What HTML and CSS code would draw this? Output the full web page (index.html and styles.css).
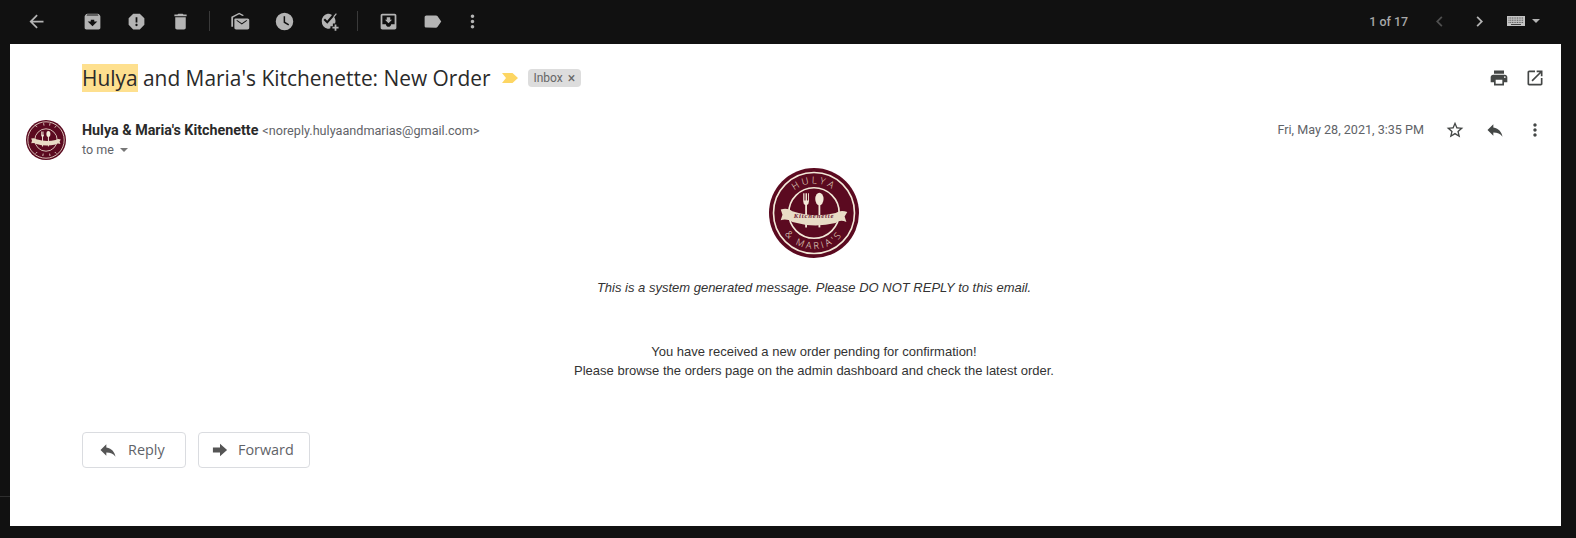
FILE: index.html
```html
<!DOCTYPE html>
<html lang="en">
<head>
<meta charset="utf-8">
<title>Hulya and Maria's Kitchenette: New Order</title>
<link rel="stylesheet" href="styles.css">
</head>
<body>
<span class="gutter-line"></span>
<header class="toolbar">
  <button class="tool tool-back" aria-label="Back"><svg viewBox="0 0 24 24"><path d="M20 11H7.830l5.590-5.590L12 4l-8 8 8 8 1.410-1.410L7.830 13H20v-2z"/></svg></button>
  <button class="tool tool-first" aria-label="Archive"><svg viewBox="0 0 24 24"><path d="M20.540 5.230l-1.390-1.680C18.880 3.210 18.470 3 18 3H6c-.47 0-.88.210-1.160.550L3.460 5.230C3.170 5.570 3 6.020 3 6.500V19c0 1.100.9 2 2 2h14c1.100 0 2-.9 2-2V6.500c0-.48-.17-.93-.46-1.270zM12 17.500L6.500 12H10v-2h4v2h3.500L12 17.500zM5.120 5l.81-1h12l.94 1H5.120z"/></svg></button>
  <button class="tool" aria-label="Report spam"><svg viewBox="0 0 24 24"><path d="M15.730 3H8.270L3 8.270v7.460L8.270 21h7.460L21 15.730V8.270L15.730 3zM12 17.300c-.72 0-1.300-.58-1.300-1.300 0-.72.58-1.300 1.300-1.300.72 0 1.300.58 1.300 1.300 0 .72-.58 1.300-1.300 1.300zm1-4.300h-2V7h2v6z"/></svg></button>
  <button class="tool" aria-label="Delete"><svg viewBox="0 0 24 24"><path d="M6 19c0 1.100.9 2 2 2h8c1.100 0 2-.9 2-2V7H6v12zM19 4h-3.500l-1-1h-5l-1 1H5v2h14V4z"/></svg></button>
  <span class="divider"></span>
  <button class="tool" aria-label="Mark as unread"><svg viewBox="0 0 24 24"><path d="M1.500 18V6.500L10.500 2l5.500 2.800-1.800.9-3.700-1.900-7 3.500V18z"/><path d="M6 8.500h14c1.300 0 2 .8 2 2V19c0 1.200-.7 2-2 2H7c-1.200 0-2-.8-2-2v-9.500c0-.6.400-1 1-1zm1.500 2.600l6 4.200 6-4.200v-.6h-1l-5 3.400-5-3.400h-1z"/></svg></button>
  <button class="tool" aria-label="Snooze"><svg viewBox="0 0 24 24"><path d="M12 2a10 10 0 1 0 0 20 10 10 0 0 0 0-20zm4.400 14.600L11 13.300V6h1.700v6.400l4.600 2.800z"/></svg></button>
  <button class="tool" aria-label="Add to tasks"><svg viewBox="0 0 24 24"><path d="M11 3c1.900 0 3.600.6 5 1.600L10.500 11 8 8.500 6.300 10.200l4.300 4.300L18 6.200c1.200 1.500 2 3.400 2 5.300 0 1-.2 2-.5 2.900H17v3h-2.800v2.400c-1 .4-2.100.6-3.200.6a9 9 0 0 1 0-17.400z"/><path d="M20.500 2.500l1 1L18.500 7l-1-1zM19 15.500h2V18h2.500v2H21v2.500h-2V20h-2.500v-2H19z"/></svg></button>
  <span class="divider"></span>
  <button class="tool" aria-label="Move to"><svg viewBox="0 0 24 24"><path d="M19 3H4.990C3.880 3 3.010 3.900 3.010 5L3 19c0 1.100.88 2 1.990 2H19c1.100 0 2-.9 2-2V5c0-1.100-.9-2-2-2zm0 12h-4c0 1.660-1.350 3-3 3s-3-1.340-3-3H4.990V5H19v10zm-3-5h-2V7h-4v3H8l4 4 4-4z"/></svg></button>
  <button class="tool" aria-label="Labels"><svg viewBox="0 0 24 24"><path d="M17.630 5.840C17.270 5.330 16.670 5 16 5L5 5.010C3.900 5.010 3 5.900 3 7v10c0 1.100.9 1.990 2 1.990L16 19c.67 0 1.270-.33 1.630-.84L22 12l-4.370-6.160z"/></svg></button>
  <button class="tool tool-more" aria-label="More"><svg viewBox="0 0 24 24"><path d="M12 8c1.100 0 2-.9 2-2s-.9-2-2-2-2 .9-2 2 .9 2 2 2zm0 2c-1.100 0-2 .9-2 2s.9 2 2 2 2-.9 2-2-.9-2-2-2zm0 6c-1.100 0-2 .9-2 2s.9 2 2 2 2-.9 2-2-.9-2-2-2z"/></svg></button>
  <div class="pager">
    <span class="pager-count">1 of 17</span>
    <button class="tool tool-dim" aria-label="Newer"><svg viewBox="0 0 24 24"><path d="M15.410 7.410L14 6l-6 6 6 6 1.410-1.410L10.830 12z"/></svg></button>
    <button class="tool" aria-label="Older"><svg viewBox="0 0 24 24"><path d="M8.590 16.590L10 18l6-6-6-6-1.410 1.410L13.170 12z"/></svg></button>
    <svg class="keyboard" viewBox="0 0 18 10" aria-hidden="true"><rect width="18" height="10" fill="#c4c4c4"/><path d="M1.500 2h15M1.500 4.200h15M1.500 6.400h15" stroke="#444" stroke-width=".9" stroke-dasharray="1 .7"/><path d="M4 8.500h10" stroke="#444"/></svg>
    <span class="caret caret-light"></span>
  </div>
</header>

<main class="card">
  <div class="subject-row">
    <h1 class="subject"><mark class="hit">Hulya</mark> and Maria's Kitchenette: New Order</h1>
    <svg class="importance" viewBox="0 0 16 12" aria-hidden="true"><path d="M0 1h10.500L16 6l-5.500 5H0l4-5z"/></svg>
    <span class="chip">Inbox<span class="chip-x">×</span></span>
    <div class="subject-actions">
      <button class="act" aria-label="Print all"><svg viewBox="0 0 24 24"><path d="M19 8H5c-1.660 0-3 1.340-3 3v6h4v4h12v-4h4v-6c0-1.660-1.340-3-3-3zm-3 11H8v-5h8v5zm3-7c-.55 0-1-.45-1-1s.45-1 1-1 1 .45 1 1-.45 1-1 1zm-1-9H6v4h12V3z"/></svg></button>
      <button class="act" aria-label="In new window"><svg viewBox="0 0 24 24"><path d="M19 19H5V5h7V3H5c-1.110 0-2 .9-2 2v14c0 1.100.89 2 2 2h14c1.100 0 2-.9 2-2v-7h-2v7zM14 3v2h3.590l-9.830 9.830 1.410 1.410L19 6.410V10h2V3h-7z"/></svg></button>
    </div>
  </div>

  <div class="sender-row">
    <svg class="avatar" viewBox="0 0 100 100" role="img" aria-label="Hulya and Maria's logo">
      <circle cx="50" cy="50" r="50" fill="#5b0a20"/>
      <circle cx="50" cy="50" r="45.500" fill="none" stroke="#f3e9d8" stroke-width="2"/>
      <circle cx="50" cy="50" r="28" fill="none" stroke="#f3e9d8" stroke-width="2"/>
      <path d="M38 29v9q0 3 2.200 4v24h2.400V42q2.200-1 2.200-4v-9h-1v8h-1.200v-8h-1.600v8h-1.200v-8z" fill="#f3e9d8"/>
      <ellipse cx="56" cy="35" rx="5" ry="7.500" fill="#f3e9d8"/>
      <rect x="54.800" y="40" width="2.400" height="26" fill="#f3e9d8"/>
      <path d="M13 46q8-2 13 2 24 8 48 2 6-4 13-1l-3 5 2 6q-7-3-12 1-24 6-48-1-6-4-13-2l2-6z" fill="#e9dcc6"/>
      <path d="M22 13l6 4M44 8l1 6M60 8l-1 6M76 14l-4 5M24 84l4-4M42 90l1-6M60 90l-1-6M76 84l-4-4" stroke="#f3e9d8" stroke-width="2"/>
    </svg>
    <div class="sender-info">
      <div class="sender-line"><strong class="sender-name">Hulya &amp; Maria's Kitchenette</strong> <span class="sender-mail">&lt;noreply.hulyaandmarias@gmail.com&gt;</span></div>
      <div class="to-line">to me <span class="caret caret-grey"></span></div>
    </div>
    <div class="sender-actions">
      <span class="date">Fri, May 28, 2021, 3:35 PM</span>
      <button class="act act-star" aria-label="Star"><svg viewBox="0 0 24 24"><path d="M22 9.240l-7.190-.62L12 2 9.190 8.630 2 9.240l5.460 4.730L5.820 21 12 17.270 18.180 21l-1.630-7.030L22 9.240zM12 15.400l-3.760 2.270 1-4.280-3.320-2.880 4.380-.38L12 6.100l1.710 4.040 4.380.38-3.320 2.880 1 4.280L12 15.400z"/></svg></button>
      <button class="act act-reply" aria-label="Reply"><svg viewBox="0 0 24 24"><path d="M10 9V5l-7 7 7 7v-4.100c5 0 8.500 1.600 11 5.100-1-5-4-10-11-11z"/></svg></button>
      <button class="act act-more" aria-label="More"><svg viewBox="0 0 24 24"><path d="M12 8c1.100 0 2-.9 2-2s-.9-2-2-2-2 .9-2 2 .9 2 2 2zm0 2c-1.100 0-2 .9-2 2s.9 2 2 2 2-.9 2-2-.9-2-2-2zm0 6c-1.100 0-2 .9-2 2s.9 2 2 2 2-.9 2-2-.9-2-2-2z"/></svg></button>
    </div>
  </div>

  <section class="message">
    <svg class="logo" viewBox="0 0 100 100" role="img" aria-label="Hulya and Maria's Kitchenette logo">
      <circle cx="50" cy="50" r="50" fill="#5b0a20"/>
      <circle cx="50" cy="50" r="45" fill="none" stroke="#f3e9d8" stroke-width="1.800"/>
      <circle cx="50" cy="50" r="28" fill="none" stroke="#f3e9d8" stroke-width="1.800"/>
      <path id="logo-arc-top" d="M17 50 A33 33 0 0 1 83 50" fill="none"/>
      <path id="logo-arc-bottom" d="M10 50 A40 40 0 0 0 90 50" fill="none"/>
      <text class="logo-ring"><textPath href="#logo-arc-top" startOffset="50%" text-anchor="middle">HULYA</textPath></text>
      <text class="logo-ring"><textPath href="#logo-arc-bottom" startOffset="50%" text-anchor="middle">&amp; MARIA'S</textPath></text>
      <path d="M38 28v9q0 3 2.200 4v25h2V41q2.200-1 2.200-4v-9h-1v8h-1.200v-8h-1.600v8h-1.200v-8z" fill="#f3e9d8"/>
      <ellipse cx="56" cy="34.500" rx="4.600" ry="7" fill="#f3e9d8"/>
      <rect x="55" y="40" width="2" height="26" fill="#f3e9d8"/>
      <path d="M13 46q8-2 13 2 24 8 48 2 6-4 13-1l-3 5 2 6q-7-3-12 1-24 6-48-1-6-4-13-2l2-6z" fill="#e9dcc6"/>
      <text class="logo-script" x="50" y="55.500" text-anchor="middle">Kitchenette</text>
    </svg>
    <p class="notice">This is a system generated message. Please DO NOT REPLY to this email.</p>
    <p class="copy">You have received a new order pending for confirmation!<br>Please browse the orders page on the admin dashboard and check the latest order.</p>
  </section>

  <div class="reply-row">
    <button class="reply-btn reply-btn-reply"><svg viewBox="0 0 24 24"><path d="M10 9V5l-7 7 7 7v-4.100c5 0 8.500 1.600 11 5.100-1-5-4-10-11-11z"/></svg><span class="reply-label">Reply</span></button>
    <button class="reply-btn reply-btn-forward"><svg viewBox="0 0 24 24"><path d="M12 4.500V9H3.500v6H12v4.500l8.500-7.500z"/></svg><span class="reply-label">Forward</span></button>
  </div>
</main>
</body>
</html>
```
FILE: styles.css
```css
* { box-sizing: border-box; }
html, body { height: 100%; }
body {
  margin: 0;
  background: #111111;
  font-family: Roboto, "Liberation Sans", sans-serif;
  overflow: hidden;
}
button { border: 0; background: none; padding: 0; font: inherit; cursor: pointer; }
.gutter-line { position: absolute; top: 496px; left: 0; width: 10px; height: 1px; background: #2e2e2e; }

.toolbar { display: flex; align-items: center; height: 44px; padding: 0 0 2px 14px; }
.tool { display: flex; align-items: center; justify-content: center; width: 44px; height: 40px; }
.tool svg { width: 21px; height: 21px; fill: #b4b4b4; }
.tool-first { margin-left: 12px; }
.tool-more { width: 36px; }
.tool-dim svg { fill: #4f4f4f; }
.divider { width: 1px; height: 20px; margin: 0 8px 0 7px; background: #3a3a3a; }
.pager { display: flex; align-items: center; margin-left: auto; padding-right: 36px; }
.pager-count { margin-right: 11px; color: #a8a8a8; font-size: 12.400px; font-weight: 500; }
.pager .tool { width: 40px; }
.keyboard { width: 18px; height: 10px; margin-left: 8px; }
.caret { display: inline-block; width: 0; height: 0; border-style: solid; border-color: transparent; border-width: 4px 4px 0; }
.caret-light { margin-left: 7px; border-top-color: #b4b4b4; }
.caret-grey { margin-left: 3px; border-top-color: #777; vertical-align: 2px; }

.card {
  display: flex;
  flex-direction: column;
  height: 482px;
  margin: 0 15px 0 10px;
  background: #fff;
}
.subject-row { display: flex; align-items: center; height: 68px; padding: 0 8px 0 72px; }
.subject { margin: 0; color: #2a2a2a; font-family: "Open Sans", sans-serif; font-size: 20.900px; font-weight: 400; line-height: 27px; }
.hit { background: #fee08f; color: inherit; }
.importance { width: 16px; height: 12px; margin-left: 12px; fill: #fdd663; }
.chip {
  display: inline-flex;
  align-items: center;
  height: 18px;
  margin-left: 10px;
  padding: 0 6px 0 5px;
  border-radius: 4px;
  background: #dddddd;
  color: #666;
  font-size: 12px;
}
.chip-x { margin-left: 5px; font-size: 14px; line-height: 1; }
.subject-actions { display: flex; margin-left: auto; }
.act { display: flex; align-items: center; justify-content: center; width: 36px; height: 36px; }
.act svg { width: 20px; height: 20px; fill: #444746; }

.sender-row { display: flex; height: 50px; padding: 8px 7px 0 16px; }
.avatar { width: 40px; height: 40px; flex: none; }
.sender-info { margin-left: 16px; }
.sender-line { height: 20px; line-height: 20px; }
.sender-name { color: #2a2a2a; font-size: 14.300px; font-weight: 700; }
.sender-mail { color: #5f6368; font-size: 12.650px; }
.to-line { height: 20px; color: #5f6368; font-size: 12.500px; line-height: 20px; }
.sender-actions { display: flex; align-items: flex-start; margin-left: auto; margin-top: -8px; }
.date { margin-right: 11px; color: #5f6368; font-size: 12.600px; line-height: 36px; }
.act-star { width: 40px; }
.act-reply { width: 40px; }
.act-more { width: 40px; margin-right: -1px; }

.message { display: flex; flex-direction: column; align-items: center; margin-left: 72px; margin-right: 15px; padding-top: 6px; color: #333; font-family: "Liberation Sans", Arial, sans-serif; font-size: 13px; line-height: 19px; }
.logo { width: 90px; height: 90px; }
.notice { margin: 20px 0 0; font-style: italic; }
.copy { margin: 45px 0 0; text-align: center; }

.reply-row { display: flex; gap: 12px; margin-top: 52px; padding-left: 72px; }
.reply-btn {
  display: flex;
  align-items: center;
  height: 36px;
  border: 1px solid #dadce0;
  border-radius: 4px;
  background: #fff;
  color: #5f6368;
  font-family: "Open Sans", sans-serif;
  font-size: 14.400px;
}
.reply-label { margin-top: -2px; }
.reply-btn svg { width: 20px; height: 20px; fill: #555; }
.reply-btn-reply { width: 104px; padding-left: 15px; }
.reply-btn-reply svg { margin-right: 10px; }
.reply-btn-forward { width: 112px; padding-left: 11px; }
.reply-btn-forward svg { margin-right: 8px; }

.logo-ring { fill: #f3e9d8; font-family: "Open Sans", sans-serif; font-size: 10.500px; font-weight: 300; letter-spacing: 3px; }
.logo-script { fill: #6d2236; font-family: "Liberation Serif", serif; font-size: 7.500px; font-style: italic; font-weight: 700; letter-spacing: .9px; }
```
